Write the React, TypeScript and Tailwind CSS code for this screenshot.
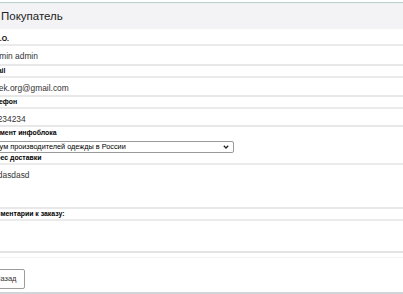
import React from "react";

const font = { fontFamily: '"Liberation Sans", Arial, sans-serif' };

function Label({ children, border = true }: { children: React.ReactNode; border?: boolean }) {
  return (
    <div
      className={`h-[12px] flex items-center pt-[1px] text-[6.9px] font-bold text-black leading-none -ml-[13px] ${
        border ? "border-b-2 border-[#ebebeb]" : ""
      }`}
    >
      {children}
    </div>
  );
}

function Value({ children, h }: { children?: React.ReactNode; h: string }) {
  return (
    <div className={`${h} -ml-[11px] pt-[6px] text-[8.4px] text-[#333] leading-none border-b-2 border-[#e8e8e8]`}>
      {children}
    </div>
  );
}

export default function App() {
  return (
    <div className="w-[403px] h-[294px] overflow-hidden bg-white" style={font}>
      <div className="h-[2px]" />
      <div className="border-t border-[#b9d2cc]">
        {/* header */}
        <div className="h-[26px] bg-[#f3f3f5] border-t border-[#e9f1f3] flex items-center pl-[1px] pt-[1px] text-[11.5px] text-[#222]">
          Покупатель
        </div>

        {/* buyer fields */}
        <div className="h-[5px]" />
        <Label>Ф.И.О.</Label>
        <Value h="h-[20px]">Admin admin</Value>
        <Label>Email</Label>
        <Value h="h-[19px]">artek.org@gmail.com</Value>
        <Label>Телефон</Label>
        <Value h="h-[18px]">11234234</Value>

        <Label border={false}>Элемент инфоблока</Label>
        <div className="h-[12px] mt-[2px] -ml-[12px] w-[246px] border border-[#9a9a9a] rounded-[2px] flex items-center justify-between pl-[2px] pr-[4px] text-[7.3px] text-black leading-none bg-white">
          <span className="-ml-[5px]">Форум производителей одежды в России</span>
          <svg width="6" height="4" viewBox="0 0 6 4" fill="none">
            <path d="M0.8 0.8 L3 3 L5.2 0.8" stroke="#222" strokeWidth="1.3" />
          </svg>
        </div>
        <Label>Адрес доставки</Label>
        <Value h="h-[44px]">asdasdasd</Value>
        <Label>Комментарии к заказу:</Label>
        <div className="h-[32px] border-b-2 border-[#e3e3e3]" />

        {/* footer */}
        <div className="border-t border-[#f2f2f2] mt-[4px] pt-[6px] pb-[3px] border-b-2 border-b-[#cfd6da]">
          <button className="h-[20px] -ml-[13px] px-[7px] border border-[#9c9c9c] rounded-[2px] bg-white text-[7.5px] text-[#333] leading-none">
            Назад
          </button>
        </div>
      </div>
    </div>
  );
}
